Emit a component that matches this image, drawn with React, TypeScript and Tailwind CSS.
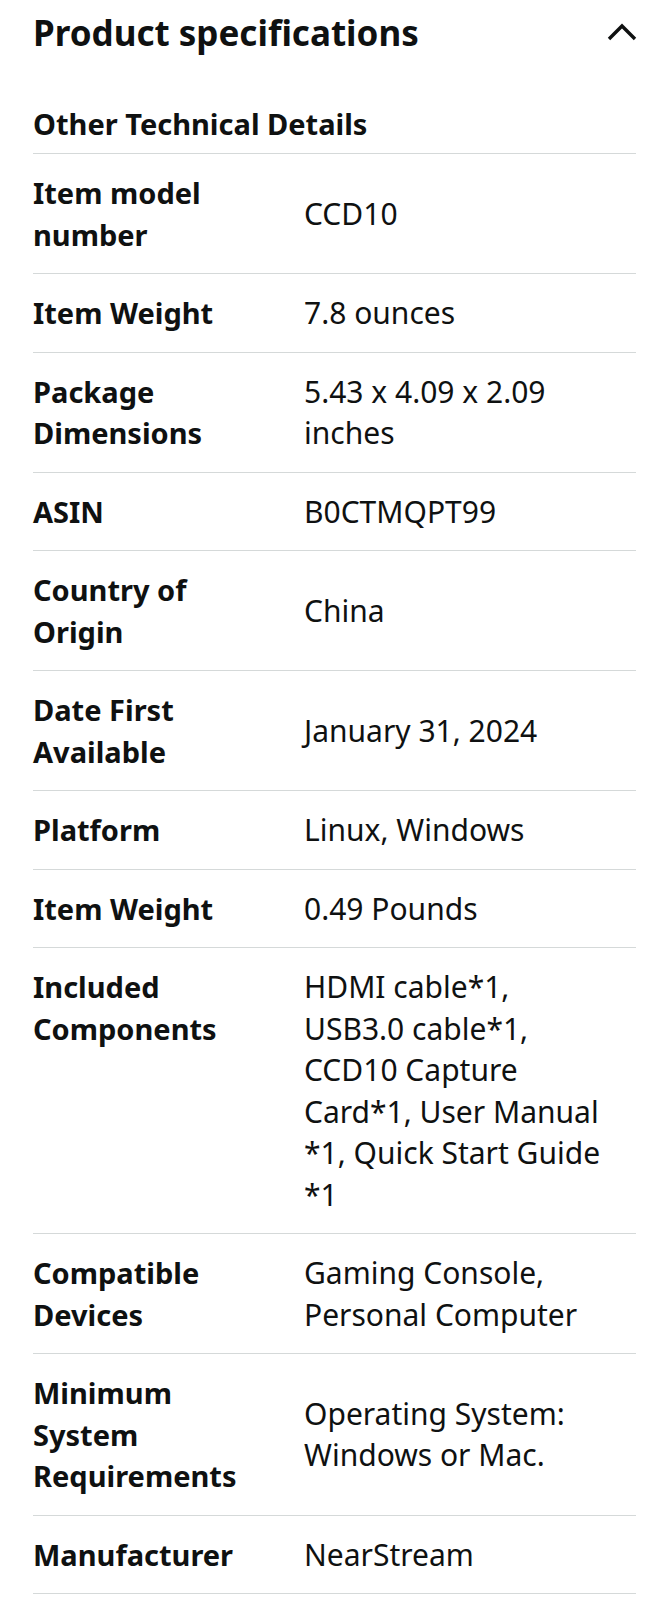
import React from "react";

const rows: { label: string; value: string }[] = [
  { label: "Item model number", value: "CCD10" },
  { label: "Item Weight", value: "7.8 ounces" },
  { label: "Package Dimensions", value: "5.43 x 4.09 x 2.09 inches" },
  { label: "ASIN", value: "B0CTMQPT99" },
  { label: "Country of Origin", value: "China" },
  { label: "Date First Available", value: "January 31, 2024" },
  { label: "Platform", value: "Linux, Windows" },
  { label: "Item Weight", value: "0.49 Pounds" },
  {
    label: "Included Components",
    value:
      "HDMI cable*1, USB3.0 cable*1, CCD10 Capture Card*1, User Manual *1, Quick Start Guide *1",
  },
  { label: "Compatible Devices", value: "Gaming Console, Personal Computer" },
  { label: "Minimum System Requirements", value: "Operating System: Windows or Mac." },
  { label: "Manufacturer", value: "NearStream" },
];

export default function App() {
  return (
    <div
      className="min-h-[1600px] bg-white px-[33px] text-[#0f1111]"
      style={{ fontFamily: '"Noto Sans", "Open Sans", sans-serif' }}
    >
      <div className="flex items-center justify-between pt-[11px]">
        <h2 className="text-[35px] font-bold leading-[44px]">Product specifications</h2>
        <svg width="32" height="20" viewBox="0 0 32 20" className="mr-[-2px] mt-[-3px]">
          <path d="M3 17 L16 4 L29 17" fill="none" stroke="#0f1111" strokeWidth="3.4" />
        </svg>
      </div>
      <div className="mt-[48px] border-b border-[#d5d9d9] pb-[9px] text-[29px] font-bold leading-[41px]">
        Other Technical Details
      </div>
      {rows.map((r, i) => (
        <div key={i} className="flex border-b border-[#d5d9d9] py-[18px] leading-[41.5px]">
          <div className="w-[271px] shrink-0 self-start pr-[40px] text-[29px] font-bold">{r.label}</div>
          <div className="flex-1 self-center pr-[26px] text-[30px]">{r.value}</div>
        </div>
      ))}
    </div>
  );
}
